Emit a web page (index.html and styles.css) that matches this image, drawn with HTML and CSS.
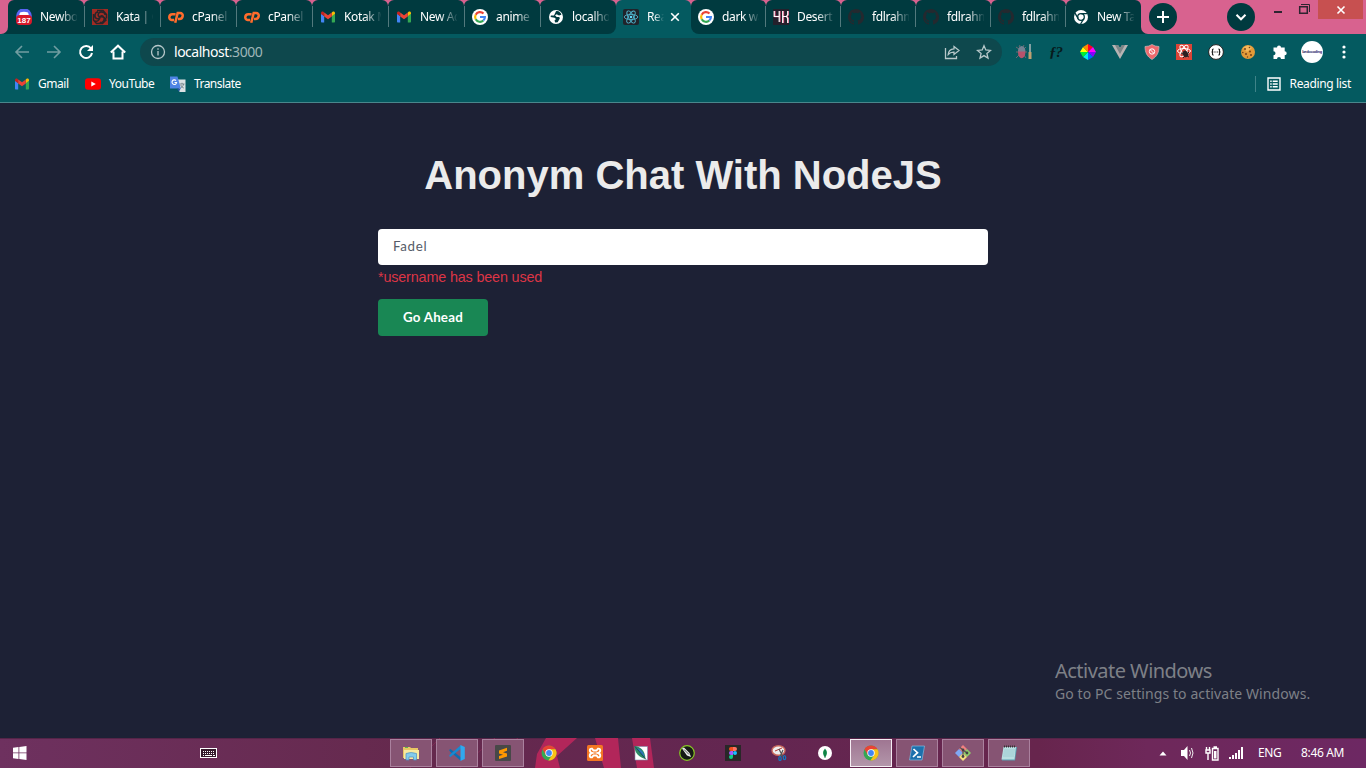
FILE: index.html
```html
<!DOCTYPE html>
<html lang="en">
<head>
<meta charset="utf-8">
<title>Anonym Chat</title>
<link rel="stylesheet" href="styles.css">
</head>
<body>
<svg class="sprite" width="0" height="0">
  <symbol id="gmail" viewBox="0 0 16 16"><path fill="#4285f4" d="M1 4.5v8.3c0 .4.3.7.7.7H4.2V7z"/><path fill="#34a853" d="M15 4.5v8.3c0 .4-.3.7-.7.7H11.8V7z"/><path fill="#fbbc04" d="M11.8 3.5V7.2L15 4.8V4c0-1.500-1.600-2-2.600-1.100z"/><path fill="#c5221f" d="M1 4v.9l3.200 2.300V3.500l-.6-.6C2.600 2 1 2.600 1 4z"/><path fill="#ea4335" d="M4.200 3.400v4L8 10.200l3.800-2.800v-4L8 6.200z"/></symbol>
  <symbol id="cpanel" viewBox="0 0 16 16"><g fill="none" stroke="#ff6c2c" stroke-width="2.500"><path d="M7.600 5.200H4.300C.4 5.200.4 11 3.600 11H6"/><path d="M7.200 13.800 9.700 4H12c4.200 0 3.200 6-.6 6H10"/></g></symbol>
  <symbol id="google" viewBox="0 0 16 16"><circle cx="8" cy="8" r="8" fill="#fff"/><g fill="none" stroke-width="2.200"><path stroke="#ea4335" d="M3.700 5.700A4.900 4.900 0 0 1 11.500 4.600"/><path stroke="#fbbc05" d="M3.700 5.700a4.900 4.900 0 0 0 0 4.600"/><path stroke="#34a853" d="M3.700 10.300a4.900 4.900 0 0 0 7.600 1.200"/><path stroke="#4285f4" d="M8 8h4.900c0 1.500-.6 2.600-1.600 3.500"/></g></symbol>
  <symbol id="github" viewBox="0 0 16 16"><path fill="#24292f" d="M8 0C3.580 0 0 3.580 0 8c0 3.540 2.290 6.530 5.470 7.590.4.070.55-.17.55-.38v-1.490c-2.010.37-2.530-.49-2.690-.94-.09-.23-.48-.94-.82-1.130-.28-.15-.68-.52-.01-.53.63-.01 1.080.58 1.230.82.72 1.210 1.870.87 2.330.66.070-.52.28-.87.51-1.070-1.780-.2-3.640-.89-3.640-3.950 0-.87.31-1.590.82-2.150-.08-.2-.36-1.020.08-2.120 0 0 .67-.21 2.200.82a7.500 7.500 0 0 1 4 0c1.530-1.040 2.200-.82 2.200-.82.44 1.100.16 1.920.08 2.120.51.56.82 1.270.82 2.150 0 3.070-1.870 3.750-3.650 3.950.29.25.54.73.54 1.480v2.200c0 .21.15.46.55.38A8 8 0 0 0 8 0z"/></symbol>
  <symbol id="chrome" viewBox="0 0 16 16"><circle cx="8" cy="8" r="7.500" fill="#34a853"/><path fill="#ea4335" d="M1.500 4.250A7.500 7.500 0 0 1 14.500 4.250L8 4.500 4.750 9.900z"/><path fill="#fbc116" d="M14.500 4.250A7.500 7.500 0 0 1 7.300 15.500L11.200 9.900 8 4.300z"/><circle cx="8" cy="8" r="3.700" fill="#fff"/><circle cx="8" cy="8" r="2.900" fill="#4285f4"/></symbol>
</svg>

<header class="browser">
  <div class="tabstrip">
    <div class="edge edge-left"></div>
    <div class="tabs tabs-before">
      <div class="tab"><svg class="fav" viewBox="0 0 16 16"><circle cx="8" cy="7" r="7.800" fill="#5865f2"/><path d="M4 3.500q4-1.500 8 0l1 3H3z" fill="#fff"/><rect x="0" y="6" width="16" height="10" rx="4" fill="#d8192b"/><text x="8" y="14" class="count">187</text></svg><span>Newbot</span></div>
      <div class="tab"><svg class="fav" viewBox="0 0 16 16"><path fill="#a32b23" d="M0 0h16v16H0z"/><g fill="none" stroke="#28252a" stroke-width="1.500"><path d="M8 8C5 7 6 3 9 3s4 1 4 3M8 8c-1 3-5 2-5-1s1-4 3-4M8 8c2-3 5 0 4 3s-3 3-4 2M8 8c0 3-3 5-5 4M8 8c4-1 6 2 6 4M1.500 5v6l3 3.500h6l3-3M5 1.500h6l3.500 4v4"/></g></svg><span>Kata | Co</span></div>
      <div class="tab"><svg class="fav"><use href="#cpanel"/></svg><span>cPanel</span></div>
      <div class="tab"><svg class="fav"><use href="#cpanel"/></svg><span>cPanel</span></div>
      <div class="tab"><svg class="fav"><use href="#gmail"/></svg><span>Kotak M</span></div>
      <div class="tab"><svg class="fav"><use href="#gmail"/></svg><span>New Ac</span></div>
      <div class="tab"><svg class="fav"><use href="#google"/></svg><span>anime</span></div>
      <div class="tab last"><svg class="fav" viewBox="0 0 16 16"><circle cx="8" cy="8" r="7" fill="#fff"/><path fill="#003a3f" d="M8 2.200c2.500-.7 5 1.300 5.400 3.600L11 6.500 8.700 5.300 7 6.200l1.700 1.700 2.600.2.500 1.500-2.100 3.700-2.500.3-.7-2.200L8 10 6.600 8.700l-4-.6.300-1.500L6 6.500z"/></svg><span>localhost</span></div>
    </div>
    <div class="tab active"><svg class="fav" viewBox="0 0 16 16"><rect width="16" height="16" rx="2" fill="#20232a"/><g fill="none" stroke="#4fb3cc" stroke-width=".9"><ellipse cx="8" cy="8" rx="6.800" ry="2.600"/><ellipse cx="8" cy="8" rx="6.800" ry="2.600" transform="rotate(60 8 8)"/><ellipse cx="8" cy="8" rx="6.800" ry="2.600" transform="rotate(120 8 8)"/></g><circle cx="8" cy="8" r="1.300" fill="#61dafb"/></svg><span>Rea</span><svg class="close" viewBox="0 0 10 10"><path d="m1.200 1.200 7.600 7.600m0-7.600L1.200 8.800"/></svg></div>
    <div class="tabs tabs-after">
      <div class="tab"><svg class="fav"><use href="#google"/></svg><span>dark wa</span></div>
      <div class="tab"><svg class="fav" viewBox="0 0 16 16"><path fill="#24202b" d="M0 0h16v16H0z"/><path fill="none" stroke="#d94f7b" stroke-width="1.300" d="M2 2v5.500h4.500M7 2v11M10.500 2v12M15.500 2v3.500l-1.500 2 1.500 2V14"/><path fill="none" stroke="#fff" stroke-width="1.200" d="M1.200 2v5.500h4.500M6.200 2v11M9.700 2v12m0-6.500h3.800l1.200-2V2m-1.200 5.500 1.200 2V14"/></svg><span>Desert</span></div>
      <div class="tab"><svg class="fav"><use href="#github"/></svg><span>fdlrahm</span></div>
      <div class="tab"><svg class="fav"><use href="#github"/></svg><span>fdlrahm</span></div>
      <div class="tab"><svg class="fav"><use href="#github"/></svg><span>fdlrahm</span></div>
      <div class="tab last"><svg class="fav" viewBox="0 0 16 16"><circle cx="8" cy="8" r="7" fill="#fff"/><g fill="none" stroke="#003a3f" stroke-width="1.300"><circle cx="8" cy="8" r="3.300"/><path d="M8 4.700h6.500M5.200 9.700 2 4.200M10.800 9.700 7.600 15"/></g><circle cx="8" cy="8" r="1.900" fill="#fff"/></svg><span>New Tab</span></div>
    </div>
    <div class="edge edge-right"></div>
    <div class="round new-tab"><svg viewBox="0 0 28 28"><path d="M14 8v12M8 14h12"/></svg></div>
    <div class="round tab-search"><svg viewBox="0 0 28 28"><path d="m9.500 11.700 4.500 4.600 4.500-4.600"/></svg></div>
    <div class="window-controls">
      <svg class="win" viewBox="0 0 40 20"><g fill="none" stroke="#2d2430"><path stroke-width="2" d="M2 12h8"/><path stroke-width="1.500" d="M27.700 6.700h7.600v6.500h-7.600z"/><path d="M27 6.500h8M29 4.500h8.500v7.500"/></g></svg>
      <div class="win-close"><svg viewBox="0 0 10 10"><path d="m1.500 1.500 7 7m0-7-7 7"/></svg></div>
    </div>
  </div>

  <div class="toolbar">
    <svg class="nav dim" viewBox="0 0 16 16"><path d="M15 8H2m6-6-6 6 6 6"/></svg>
    <svg class="nav dim" viewBox="0 0 16 16"><path d="M1 8h13M8 2l6 6-6 6"/></svg>
    <svg class="nav" viewBox="0 0 16 16"><path d="M13 4.500A6 6 0 1 0 14 9"/><path class="solid" d="M15 1v6H9z"/></svg>
    <svg class="nav" viewBox="0 0 16 16"><path d="M.8 8.500 8 1.700l7.200 6.800M3.500 7.500v7h9v-7"/></svg>
    <div class="omnibox">
      <svg class="info" viewBox="0 0 16 16"><circle cx="8" cy="8" r="6.500"/><path d="M8 7v4.500M8 4.300v1.500"/></svg>
      <span class="url">localhost<i>:3000</i></span>
      <svg class="share" viewBox="0 0 16 16"><path d="M1.500 4v10.500h11V12M10 2.500 15 6.500l-5 4V8.200C7 8 5.500 9 4.200 10.500 4.400 7 6.500 5 10 4.800z"/></svg>
      <svg class="star" viewBox="0 0 16 16"><path d="m8 1.700 1.800 4.300 4.700.4-3.600 3.100 1.100 4.600-4-2.500-4 2.500 1.100-4.600-3.600-3.100 4.700-.4z"/></svg>
    </div>
    <div class="extensions">
      <svg viewBox="0 0 16 16"><path fill="none" stroke="#6e6870" d="m0 3 3 2M0 8h3m-3 6 3-3m7-8-2 2m0 3h3m-1 6-2-3M3 3l1-2m3 2 1-2"/><ellipse cx="5.700" cy="8.500" rx="3.700" ry="5.800" fill="#b6536c"/><path d="M2 7.500a3.700 5.500 0 0 1 7.400 0z" fill="#738293"/><path stroke="#c8c8c8" stroke-width="1.300" d="M14 0v8"/><path stroke="#c0a070" stroke-width="3" d="M14 8v7"/></svg>
      <svg viewBox="0 0 16 16"><text x="1" y="12.500" class="fx" textLength="14">ƒ?</text></svg>
      <svg viewBox="0 0 16 16"><path fill="#ff0" d="M8 8 3 3 0 8z"/><path fill="#f80" d="M8 8 3 3 8 0z"/><path fill="#f02" d="M8 8V0l5 3z"/><path fill="#f0f" d="m8 8 5-5 3 5z"/><path fill="#80f" d="M8 8h8l-3 5z"/><path fill="#06f" d="m8 8 5 5-5 3z"/><path fill="#0ee" d="M8 8v8l-5-3z"/><path fill="#0e3" d="m8 8-5 5-3-5z"/></svg>
      <svg viewBox="0 0 16 16"><path fill="#b7b3b3" d="M0 1h6l2 3 2-3h6L8 15z"/><path fill="#7c8587" d="M3 1h3l2 3 2-3h3L8 10z"/></svg>
      <svg viewBox="0 0 16 16"><path fill="#ee6a6e" stroke="#c9b9ba" stroke-width=".7" d="M8 .5q3 2 7 2c0 6-2 10-7 13C3 12.500 1 8.500 1 2.500q4 0 7-2z"/><circle cx="8" cy="7.500" r="2.700" fill="none" stroke="#fff"/><path stroke="#fff" d="m6 5.500 4 4"/></svg>
      <svg viewBox="0 0 16 16"><path fill="#db4437" d="M0 0h16v16H0z"/><g fill="none" stroke="#fff"><ellipse cx="8" cy="7" rx="6.500" ry="2.500"/><ellipse cx="8" cy="7" rx="6.500" ry="2.500" transform="rotate(60 8 7)"/><ellipse cx="8" cy="7" rx="6.500" ry="2.500" transform="rotate(120 8 7)"/></g><ellipse cx="9.500" cy="10" rx="2.700" ry="3.500" fill="#2b2022" transform="rotate(-35 9.500 10)"/><path stroke="#2b2022" d="m5 9 8 4m0-5-6 6"/></svg>
      <svg viewBox="0 0 16 16"><circle cx="8" cy="8" r="7.400" fill="#fff" stroke="#222"/><path fill="none" stroke="#222" stroke-width="1.100" d="M5.700 5Q4 5 4.500 6.500T3.500 8q1.500 0 1 1.500T5.700 11M10.300 5q1.700 0 1.200 1.500T12.500 8q-1.500 0-1 1.500T10.300 11"/><path stroke="#222" stroke-dasharray="1 .7" d="M5.700 8h5"/></svg>
      <svg viewBox="0 0 16 16"><circle cx="8" cy="8" r="7" fill="#e29a38"/><path fill="#f4b95d" d="M3 4q5-5 9 0L7 8z"/><g fill="#754018"><circle cx="5" cy="5" r="1"/><circle cx="9.500" cy="3.500" r=".8"/><circle cx="10" cy="7.500" r="1"/><circle cx="6" cy="10" r="1"/><circle cx="11" cy="11" r="1"/><circle cx="2.800" cy="8.500" r=".8"/><circle cx="7.500" cy="13" r=".7"/></g></svg>
      <svg viewBox="0 0 16 16"><path fill="#fff" d="M1.500 3.500H5a2 2 0 1 1 4 0h3.700v3.700a2 2 0 1 1 0 4V15H9a2 2 0 0 0-4 0H1.500v-3.700a2 2 0 0 0 0-4z"/></svg>
    </div>
    <div class="avatar">bedocoding</div>
    <svg class="menu" viewBox="0 0 4 16"><circle cx="2" cy="3" r="1.600"/><circle cx="2" cy="8" r="1.600"/><circle cx="2" cy="13" r="1.600"/></svg>
  </div>

  <div class="bookmarks">
    <svg class="bm"><use href="#gmail"/></svg><span class="b-gmail">Gmail</span>
    <svg class="bm" viewBox="0 0 16 16"><rect y="2.200" width="16" height="11.600" rx="3" fill="#f00"/><path fill="#fff" d="m6.300 5.500 4.500 2.500-4.500 2.500z"/></svg><span class="b-youtube">YouTube</span>
    <svg class="bm" viewBox="0 0 16 16"><path fill="#dce1e3" d="M7 3.500h8.500v12.500H9.500z"/><path fill="none" stroke="#718087" stroke-width=".9" d="M9.500 8h5M12 6.800V8m1.700 0c-.5 2-2 3.500-3.200 4m.3-3c.8 2 1.700 2.500 3 3"/><path fill="#4f84e5" d="M0 .5h7.500l3.300 12H0z"/><path fill="#2851a8" d="M7 12.500h3.800l-2 3z"/><path fill="none" stroke="#fff" stroke-width="1.100" d="M6 4.600A2.300 2.300 0 1 0 6.600 6.500H4.500"/></svg><span class="b-translate">Translate</span>
    <div class="reading"><svg viewBox="0 0 14 14"><path d="M1 1h12v12H1zM3.200 4.200h1.500m1 0h5M3.200 7h1.500m1 0h5M3.200 9.800h1.500m1 0h5"/></svg><span>Reading list</span></div>
  </div>
</header>

<main class="page">
  <h1>Anonym Chat With NodeJS</h1>
  <form class="login">
    <input class="username" type="text" value="Fadel">
    <p class="error">*username has been used</p>
    <button class="submit" type="button">Go Ahead</button>
  </form>
  <aside class="activate"><div class="activate-title">Activate Windows</div><div class="activate-text">Go to PC settings to activate Windows.</div></aside>
</main>

<footer class="taskbar">
  <svg class="wallpaper" viewBox="0 0 1366 30" preserveAspectRatio="none"><path fill="#b2265a" d="M546 0h31l-20 18 3 12h-25l2-14zM595 0h23l3 30h-17zM632 0h18l4 30h-17z"/><path stroke="#7e2b54" fill="none" d="m410 30 30-30m20 30 35-30m-15 30 38-30"/></svg>
  <svg class="start" viewBox="0 0 14 14"><path fill="#fff" d="M0 1.800 5.500 1v5.500H0zM6.300.9 13.500 0v6.500H6.300zM0 7.300h5.500V13L0 12.200zM6.300 7.300h7.200V14l-7.200-1z"/></svg>
  <svg class="keyboard" viewBox="0 0 18 11" shape-rendering="crispEdges"><path fill="#351b2c" stroke="#fff" d="M.5.5h16v9H.5z"/><path stroke="#fff" stroke-dasharray="1 1" d="M3 3.500h12M3 5.500h12"/><path stroke="#fff" d="M3 7.500h1m1 0h7m1 0h2"/></svg>
  <nav class="apps">
    <div class="app open"><svg viewBox="0 0 16 16"><path fill="#e8c764" d="M0 2h7l1 1h7v10H0z"/><path fill="#f7e9a0" d="M1 5h15v9H1z"/><path fill="#5bb84b" d="M2 2h3v1H2z"/><path fill="#83cbed" stroke="#4a91bf" stroke-width=".7" d="M3 15V8.500q5-2 10.500 0V15h-3v-3H6v3z"/></svg></div>
    <div class="app open"><svg viewBox="0 0 16 16"><path fill="#0d6eb2" d="m0 5 1.500-1L12 12.500V16L1 6.500z"/><path fill="#178ad1" d="m0 11 1.500 1L12 3.500V0L1 9.500z"/><path fill="#30a8ee" d="m11.500 0 4.300 2v12l-4.300 2z"/></svg></div>
    <div class="app open"><svg viewBox="0 0 16 16"><rect width="16" height="16" rx="1" fill="#484848"/><path fill="#ff9800" d="m4 5.500 8-2.700v3L8 7.300l4 1.300v2.800l-8 2.700v-3l4-1.400-4-1.300z"/></svg></div>
    <div class="app"><svg><use href="#chrome"/></svg></div>
    <div class="app"><svg viewBox="0 0 16 16"><rect width="16" height="16" rx="1.500" fill="#f37623"/><path fill="none" stroke="#fff" stroke-width="1.900" d="M5 3.700c-3-.7-2.800 3.500 0 4.300-3 .8-3 5 0 4.300l1.500-1.800h3L11 12.300c3 .7 3-3.500 0-4.300 3-.8 3-5 0-4.300L9.500 5.500h-3z"/></svg></div>
    <div class="app"><svg viewBox="0 0 16 16"><path fill="#fff" stroke="#8092ac" stroke-width=".6" d="M2 1.500h12.500v13.500H2z"/><path fill="#2c8a66" d="M1.500 1C7 1.500 12 5 12.500 14 6 12.500 1.500 8 1.500 1z"/><path fill="#2b78b8" d="M3 3c5 1 8 4 8.500 9z"/><path stroke="#16334c" stroke-width=".7" d="m2 1.500 11 13"/></svg></div>
    <div class="app"><svg viewBox="0 0 16 16"><circle cx="8" cy="8" r="7.300" fill="#151a15" stroke="#89c925" stroke-width="1.200"/><path fill="#eee" d="m3 3.500 2-1 5.500 5.500 1.500 4-4-1.500z"/><path stroke="#151a15" stroke-width=".7" d="m5 4.500 5 5"/></svg></div>
    <div class="app"><svg viewBox="0 0 16 16"><path fill="#292728" d="M0 0h16v16H0z"/><path fill="#f24e1e" d="M8 2H6a2 2 0 0 0 0 4h2z"/><path fill="#ff7262" d="M8 2h2a2 2 0 0 1 0 4H8z"/><path fill="#a259ff" d="M8 6H6a2 2 0 0 0 0 4h2z"/><circle cx="10" cy="8" r="2" fill="#1abcfe"/><path fill="#0acf83" d="M8 10H6a2 2 0 1 0 2 2z"/></svg></div>
    <div class="app"><svg viewBox="0 0 16 16"><ellipse cx="7.500" cy="5.500" rx="6.500" ry="4.800" fill="#eee" stroke="#c96a5e" stroke-width="1.400"/><path stroke="#b43c36" d="m4 6 7-3"/><path fill="none" stroke="#555" stroke-width="1.200" d="m8 4 4 8m0-7-3 7"/><g fill="none" stroke="#1677bb" stroke-width="1.300"><ellipse cx="9" cy="13.500" rx="1.200" ry="2"/><ellipse cx="13.500" cy="12.700" rx="1.200" ry="2"/></g></svg></div>
    <div class="app"><svg viewBox="0 0 16 16"><circle cx="8" cy="8" r="7" fill="#fff"/><path fill="#13904c" d="M8 3.500q4 4.500 0 9-4-4.500 0-9z"/><path stroke="#0c6a39" stroke-width=".7" d="M8 5v8"/></svg></div>
    <div class="app open current"><svg><use href="#chrome"/></svg></div>
    <div class="app open"><svg viewBox="0 0 16 16"><path fill="#1d70ac" stroke="#83bcdf" stroke-width=".7" d="M3 1h12.500L13 15H.5z"/><path fill="none" stroke="#fff" stroke-width="1.700" d="m4.500 4 4 3.700L4 12m4 0h4"/></svg></div>
    <div class="app open"><svg viewBox="0 0 16 16"><path fill="#f08080" d="m8 0 4 4-4 4-4-4z"/><path fill="#80a8f4" d="m0 8 4-4 4 4-4 4z"/><path fill="#8fcf6a" d="m8 8 4-4 4 4-4 4z"/><path fill="#f5e080" d="m4 12 4-4 4 4-4 4z"/><path fill="none" stroke="#555" stroke-width="1.200" d="M5 2.500 8 5v7m0-7 4 3"/><g fill="#444"><circle cx="8" cy="5" r="1.400"/><circle cx="8" cy="11.500" r="1.400"/><circle cx="12" cy="8" r="1.400"/></g></svg></div>
    <div class="app open"><svg viewBox="0 0 16 16"><path fill="#599eb2" d="M3 2h13l-2 13.500H1z"/><path fill="#b9dfe2" d="M2.500 2H15l-1.500 12.500H.5z"/><path stroke="#8dc0c9" stroke-width=".6" d="M3 5h11M2.700 7h11M2.400 9h11M2 11h11"/><path stroke="#333" stroke-width="2" stroke-dasharray="1 1" d="M3 1.500h12"/></svg></div>
  </nav>
  <div class="tray">
    <svg class="up" viewBox="0 0 8 5"><path fill="#fff" d="m4 .5 3.500 4h-7z"/></svg>
    <svg class="sound" viewBox="0 0 14 14"><path fill="#fff" d="M0 4h3l3.500-4v14L3 10H0z"/><path fill="none" stroke="#eee" d="M8.500 4q2 3 0 6m2-8q3 5 0 10"/></svg>
    <svg class="battery" viewBox="0 0 14 15"><path fill="none" stroke="#fff" stroke-width="1.400" d="M7.500 2.500h5.500v11.500H7.500zM8.500 1h3.500M1 4h4v3H1zM1.500 1v3m3-3v3M3 7v7"/><path fill="#fff" d="M9 5h2.500v7.500H9z"/></svg>
    <svg class="signal" viewBox="0 0 15 12"><path fill="#fff" d="M0 10h2v2H0zM3 8h2v4H3zM6 6h2v6H6zM9 3h2v9H9zM12 0h2v12h-2z"/></svg>
    <span class="lang">ENG</span><span class="clock">8:46 AM</span>
  </div>
</footer>
</body>
</html>
```
FILE: styles.css
```css
* { box-sizing: border-box; }
body {
  margin: 0;
  width: 1366px;
  height: 768px;
  overflow: hidden;
  display: flex;
  flex-direction: column;
  font-family: "Noto Sans", "Open Sans", sans-serif;
  font-size: 12px;
  letter-spacing: -0.35px;
  color: #fff;
  background: #1d2135;
}
svg { display: block; flex: none; }
.sprite { position: absolute; }

.browser { height: 103px; flex: none; background: #045a60; border-bottom: 1px solid #4a878c; }

/* tab strip */
.tabstrip { display: flex; height: 34px; background: #d8628f; }
.edge { width: 8px; flex: none; background: #003a3f; }
.edge::before { content: ""; display: block; height: 34px; background: #d8628f; }
.edge-left::before { border-bottom-right-radius: 7px; }
.edge-right::before { border-bottom-left-radius: 7px; }
.tabs { display: flex; background: linear-gradient(#d8628f 10px, #045a60 10px); }
.tab {
  position: relative;
  display: flex;
  align-items: center;
  width: 76px;
  height: 34px;
  padding-left: 8px;
  background: #003a3f;
  border-radius: 6px 6px 0 0;
}
.tabs-after .tab { width: 75px; padding-left: 7px; }
.tab:not(.last):not(.active)::after {
  content: "";
  position: absolute;
  right: -1px;
  top: 6px;
  width: 1px;
  height: 21px;
  background: #52797d;
  z-index: 1;
}
.tabs-after .tab:not(.last)::after { right: 0; }
.tabs-before .last { border-bottom-right-radius: 8px; }
.tabs-after .tab:first-child { border-bottom-left-radius: 8px; }
.tab.active { width: 75px; padding-left: 7px; background: #045a60; }
.fav { width: 16px; height: 16px; margin-right: 8px; }
.tab span {
  width: 37px;
  overflow: hidden;
  white-space: nowrap;
  line-height: 18px;
  -webkit-mask-image: linear-gradient(90deg, #000 20px, transparent 38px);
  mask-image: linear-gradient(90deg, #000 20px, transparent 38px);
}
.tab.active span {
  width: 17px;
  -webkit-mask-image: linear-gradient(90deg, #000 7px, transparent 17px);
  mask-image: linear-gradient(90deg, #000 7px, transparent 17px);
}
.close { width: 10px; height: 10px; margin-left: 6px; fill: none; stroke: #fff; stroke-width: 1.6; }
.count { font: bold 8px "Liberation Sans", sans-serif; letter-spacing: 0; fill: #fff; text-anchor: middle; }
.round { width: 28px; height: 28px; margin-top: 3px; border-radius: 50%; background: #003a3f; flex: none; }
.round svg { width: 28px; height: 28px; fill: none; stroke: #fff; stroke-width: 2; }
.tab-search { margin-left: 50px; }
.window-controls { display: flex; margin-left: 17px; }
.win { width: 40px; height: 20px; }
.win-close { display: flex; justify-content: center; align-items: center; width: 45px; height: 19px; margin-left: 6px; background: #c75050; }
.win-close svg { width: 10px; height: 10px; stroke: #fff; stroke-width: 1.6; }

/* address row */
.toolbar { display: flex; align-items: center; height: 36px; padding-left: 14px; }
.nav { width: 16px; height: 16px; margin-right: 16px; fill: none; stroke: #fff; stroke-width: 2; }
.nav.dim { stroke: #719da1; stroke-width: 1.6; }
.nav .solid { fill: #fff; stroke: none; }
.omnibox { display: flex; align-items: center; width: 862px; height: 28px; margin-left: -2px; padding: 0 10px; border-radius: 14px; background: #0e484d; }
.omnibox svg { width: 16px; height: 16px; fill: none; stroke: #b7c8ca; stroke-width: 1.3; }
.url { margin-left: 8px; font-size: 14px; letter-spacing: -0.48px; line-height: 20px; }
.url i { font-style: normal; color: #9fb6b8; }
.omnibox .share { margin-left: auto; }
.omnibox .star { margin-left: 16px; }
.extensions { display: flex; gap: 16px; margin-left: 14px; }
.extensions svg { width: 16px; height: 16px; }
.fx { font: italic bold 15px "Liberation Serif", serif; fill: #071b1d; letter-spacing: 0; }
.avatar { width: 22px; height: 22px; margin-left: 13px; border-radius: 50%; background: #fff; color: #302168; font: bold 4px/21px "Liberation Sans", sans-serif; letter-spacing: -0.3px; text-align: center; }
.menu { width: 4px; height: 16px; margin-left: 19px; fill: #fff; }

/* bookmarks row */
.bookmarks { display: flex; align-items: center; height: 28px; padding: 0 15px 0 14px; line-height: 18px; letter-spacing: -0.45px; }
.bm { width: 16px; height: 16px; margin-right: 8px; }
.b-gmail { width: 47px; }
.b-youtube { width: 61px; }
.b-translate { letter-spacing: -0.55px; }
.reading { display: flex; align-items: center; height: 16px; margin-left: auto; padding-left: 11px; border-left: 1px solid #3f8388; letter-spacing: -0.35px; }
.reading svg { width: 14px; height: 14px; margin-right: 9px; fill: none; stroke: #fff; stroke-width: 1.4; }

/* page */
.page { position: relative; flex: 1; letter-spacing: 0; }
h1 { margin: 49px 0 31px; font: bold 40px/46px "Liberation Sans", Arial, sans-serif; text-align: center; color: #ebebeb; }
.login { width: 610px; margin: 0 auto; }
.username { display: block; width: 610px; height: 36px; padding: 0 15px 2px; border: 0; border-radius: 4px; background: #fff; color: #555c68; font: 13.33px Lato, sans-serif; letter-spacing: 0.7px; }
.error { margin: 4px 0 13px; font: 14.4px/17px "Liberation Sans", Arial, sans-serif; letter-spacing: -0.17px; color: #dc3545; }
.submit { display: block; width: 110px; height: 37px; padding: 0 0 1px; border: 0; border-radius: 4px; background: #198754; color: #fff; font: bold 13.33px Lato, sans-serif; letter-spacing: 0.2px; }
.activate { position: absolute; left: 1055px; bottom: 34px; color: #7d8087; white-space: nowrap; }
.activate-title { font-size: 20px; line-height: 26px; letter-spacing: -0.53px; }
.activate-text { font-size: 14px; line-height: 20px; letter-spacing: 0.09px; }

/* taskbar */
.taskbar { position: relative; display: flex; align-items: center; height: 30px; flex: none; background: linear-gradient(90deg, #6e315f 0, #65294d 30%, #632651 55%, #67254d 76%, #6e285a 84%, #6d2863 100%); box-shadow: inset 0 1px #552448; }
.wallpaper { position: absolute; left: 0; top: 0; width: 1366px; height: 30px; }
.taskbar > :not(.wallpaper) { position: relative; }
.start { width: 14px; height: 14px; margin-left: 13px; }
.keyboard { width: 18px; height: 11px; margin-left: 173px; }
.apps { display: flex; gap: 4px; margin-left: 172px; }
.app { display: flex; align-items: center; justify-content: center; width: 42px; height: 28px; border: 1px solid transparent; }
.app svg { width: 16px; height: 16px; }
.open { background: #865473; border-color: #aa819e; }
.current { background: linear-gradient(#9f7692, #b396aa); border-color: #f5edf3; }
.tray { display: flex; align-items: center; margin-left: 129px; line-height: 18px; }
.up { width: 8px; height: 5px; }
.sound { width: 14px; height: 14px; margin-left: 14px; }
.battery { width: 14px; height: 15px; margin-left: 10px; }
.signal { width: 15px; height: 12px; margin-left: 10px; }
.lang { width: 43px; margin-left: 14px; }
```
